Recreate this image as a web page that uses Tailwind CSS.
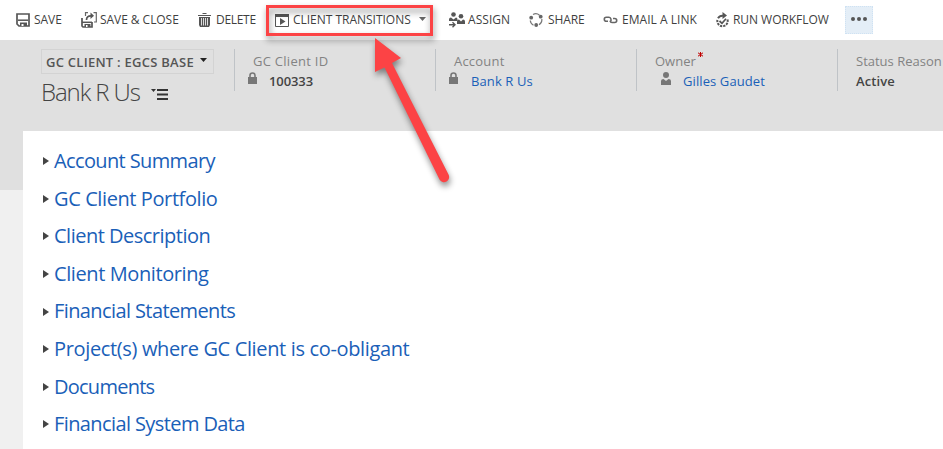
<!DOCTYPE html>
<html lang="en">
<head>
<meta charset="utf-8">
<title>GC Client</title>
<script src="https://cdn.jsdelivr.net/npm/@tailwindcss/browser@4"></script>
</head>
<body class="relative h-[449px] w-[943px] overflow-hidden bg-white font-['Open_Sans','Noto_Sans',sans-serif] text-[#444]">
<nav class="grid h-10 grid-cols-[65px_117px_77px_174px_80px_74px_113px_129px_28px] items-center pl-4 text-[12px] font-medium whitespace-nowrap text-[#3f3f3f]">
  <div class="flex items-center gap-[4px]">
    <svg class="h-[14px] w-[14px] shrink-0" viewBox="0 0 14 14"><path d="M1 1H13V13H3L1 11Z" fill="none" stroke="#555" stroke-width="1.7"/><path d="M2 7.2H12" stroke="#555" stroke-width="1.5"/><path d="M4 9.500H11V13H4Z" fill="#555"/><path d="M5.500 11H7.500V13H5.500Z" fill="white"/></svg>
    <span class="tracking-[-0.05px]">SAVE</span>
  </div>
  <div class="flex items-center gap-[3px]">
    <svg class="h-[16px] w-[16px] shrink-0" viewBox="0 0 16 16"><path d="M1 6V14L2 15H11V10" fill="none" stroke="#555" stroke-width="1.7"/><path d="M1 10.300H11" stroke="#555" stroke-width="1.5"/><path d="M3.500 12H9.500V15H3.500Z" fill="#555"/><path d="M5 13H6.500V15H5Z" fill="white"/><path d="M4.500 4V.700H7M12.500 .700H15.300V10H13" fill="none" stroke="#666" stroke-width="1.2"/><path d="M5.500 8C5.500 5 7 3.800 10 3.800" fill="none" stroke="#555" stroke-width="1.7"/><path d="M9.500 .500L13 3.800L9.500 7Z" fill="#555"/></svg>
    <span class="tracking-[-0.05px]">SAVE &amp; CLOSE</span>
  </div>
  <div class="flex items-center gap-[5px]">
    <svg class="h-[14px] w-[13px] shrink-0" viewBox="0 0 13 14"><path d="M0 2.5H13M4.5 .5H8.5" stroke="#555"/><path d="M1 4H12V12L11 14H2L1 12Z" fill="#555"/><path d="M3.5 5V12.5M5.5 5V12.5M7.5 5V12.5M9.5 5V12.5" stroke="white" stroke-width=".8"/></svg>
    <span class="tracking-[-0.3px]">DELETE</span>
  </div>
  <div class="flex items-center">
    <svg class="h-[13px] w-[14px] shrink-0" viewBox="0 0 14 13"><path d="M.5 .5H13.5V12.5H.5Z" fill="none" stroke="#555"/><path d="M0 0H14V3H0Z" fill="#555"/><path d="M5 4L10.5 7.5L5 11Z" fill="#555"/></svg>
    <span class="ml-[4px] w-[126px] tracking-[-0.02px]">CLIENT TRANSITIONS</span>
    <svg class="mb-[2px] h-[4px] w-[7px]" viewBox="0 0 7 4"><path d="M0 0H7L3.5 4Z" fill="#666"/></svg>
  </div>
  <div class="flex items-center gap-[3px]">
    <svg class="h-[16px] w-[16px] shrink-0" viewBox="0 0 16 16" fill="#555"><circle cx="4.5" cy="2.5" r="2.3"/><path d="M0 9V7.500Q0 5.500 2 5.500L4.5 7.500L7 5.500Q8.500 5.500 8.500 7.500V9Z"/><circle cx="12" cy="4.300" r="2.3"/><path d="M8 12V9.5Q8 7.5 10 7.5L12 9.500L14 7.5Q16 7.5 16 9.5V12Z"/><path d="M0 12.7H6M3.5 10.2L6 12.7L3.5 15.2" fill="none" stroke="#555" stroke-width="1.4"/></svg>
    <span class="tracking-[0.05px]">ASSIGN</span>
  </div>
  <div class="flex items-center gap-[5px]">
    <svg class="h-[14px] w-[14px] shrink-0" viewBox="0 0 14 14" fill="#666"><path d="M4 1.500A5.700 5.700 0 0 1 10.500 2.200M12.800 6A5.700 5.700 0 0 1 10 11.700M4.500 12.200A5.700 5.700 0 0 1 1.300 7.500" fill="none" stroke="#777" stroke-width="1.2"/><circle cx="2.2" cy="4.7" r="1.900"/><circle cx="11.7" cy="3.700" r="1.900"/><circle cx="7.2" cy="12" r="1.900"/></svg>
    <span class="tracking-[-0.1px]">SHARE</span>
  </div>
  <div class="flex items-center gap-[4px]">
    <svg class="h-[8px] w-[15px] shrink-0" viewBox="0 0 15 8"><path d="M5 5.300H3.3A2 2 0 0 1 3.3 1.300H6Q7.500 1.300 8 3.300Q8.500 5 6.800 5.300M10 2.500H11.7A2 2 0 0 1 11.7 6.5H9Q7.500 6.5 7 4.700" fill="none" stroke="#666" stroke-width="1.6"/></svg>
    <span class="tracking-[0.03px]">EMAIL A LINK</span>
  </div>
  <div class="flex items-center gap-[4px]">
    <svg class="h-[16px] w-[13px] shrink-0" viewBox="0 0 13 16"><path d="M2 6.3A5.2 5.2 0 0 1 7 3.8" fill="none" stroke="#555" stroke-width="2"/><path d="M6.5 0L11 3.5L6.5 7Z" fill="#555"/><path d="M11.5 7.5A5.2 5.2 0 1 1 1.4 8" fill="none" stroke="#555" stroke-width="2" stroke-dasharray="2.3 1"/><path d="M3.5 9L6 11.3L10 6.8" fill="none" stroke="#555" stroke-width="1.7"/></svg>
    <span class="tracking-[-0.05px]">RUN WORKFLOW</span>
  </div>
  <div class="flex h-7 items-center justify-center gap-[2px] border border-dotted border-[#cfe2f3] bg-[#e4eef7] pb-[2px]">
    <i class="h-[4px] w-[4px] rounded-full bg-[#555]"></i><i class="h-[4px] w-[4px] rounded-full bg-[#555]"></i><i class="h-[4px] w-[4px] rounded-full bg-[#555]"></i>
  </div>
</nav>
<header class="flex h-[91px] w-full overflow-hidden bg-[#e0e0e0] pt-[9px] pl-[41px] text-[13px] leading-[20px] whitespace-nowrap">
  <div class="w-[193px] shrink-0">
    <div class="flex h-[25px] w-[173px] items-center border border-[#d3d3d3] pl-[4px] text-[13px] font-semibold text-[#555]">
      <span class="w-[154px] tracking-[0.26px]">GC CLIENT : EGCS BASE</span>
      <svg class="mb-[4px] h-[4px] w-[7px]" viewBox="0 0 7 4"><path d="M0 0H7L3.5 4Z" fill="#222"/></svg>
    </div>
    <div class="mt-[2px] flex h-8 items-center">
      <h1 class="w-[110px] text-[24px] font-light tracking-[-1.1px] text-[#444]">Bank R Us</h1>
      <svg class="mt-[5px] h-[11px] w-[17px]" viewBox="0 0 17 11"><path d="M0 0H5L2.5 3Z" fill="#333"/><path d="M6 1H17M6 5.5H17M6 10H17" stroke="#333" stroke-width="2"/></svg>
    </div>
  </div>
  <div class="h-[42px] w-[201px] shrink-0 border-l border-[#bfc3c7] pt-[2px] pl-[18px]">
    <div class="tracking-[0.27px] text-[#838383]">GC Client ID</div>
    <div class="-ml-[5px] flex">
      <svg class="mt-[1px] mr-[12px] h-[12px] w-[9px]" viewBox="0 0 9 12"><path d="M2 6V3.5A2.5 2.5 0 0 1 7 3.5V6" fill="none" stroke="#777" stroke-width="1.6"/><path d="M0 5H9V12H0Z" fill="#777"/></svg>
      <b class="font-semibold tracking-[-0.1px]">100333</b>
    </div>
  </div>
  <div class="h-[42px] w-[201px] shrink-0 border-l border-[#bfc3c7] pt-[2px] pl-[18px]">
    <div class="tracking-[0.2px] text-[#838383]">Account</div>
    <div class="-ml-[5px] flex">
      <svg class="mt-[1px] mr-[13px] h-[12px] w-[9px]" viewBox="0 0 9 12"><path d="M2 6V3.5A2.5 2.5 0 0 1 7 3.5V6" fill="none" stroke="#777" stroke-width="1.6"/><path d="M0 5H9V12H0Z" fill="#777"/></svg>
      <a class="tracking-[0.1px] text-[#1a60b8]">Bank R Us</a>
    </div>
  </div>
  <div class="h-[42px] w-[201px] shrink-0 border-l border-[#bfc3c7] pt-[2px] pl-[18px]">
    <div class="flex text-[#838383]"><span class="w-[43px]">Owner</span><svg class="mt-[1px] h-[5px] w-[5px]" viewBox="0 0 5 5"><path d="M2.5 0V5M0 .8L5 4.2M5 .8L0 4.2" stroke="#c00000"/></svg></div>
    <div class="flex pl-[6px]">
      <svg class="mt-[1px] mr-[12px] h-[13px] w-[10px]" viewBox="0 0 10 13" fill="#777"><circle cx="5" cy="3" r="3"/><path d="M0 13V9Q0 7 2.5 7L5 9L7.5 7Q10 7 10 9V13Z"/></svg>
      <a class="tracking-[0.1px] text-[#1a60b8]">Gilles Gaudet</a>
    </div>
  </div>
  <div class="h-[42px] w-[106px] shrink-0 border-l border-[#bfc3c7] pt-[2px] pl-[18px]">
    <div class="text-[#838383]">Status Reason</div>
    <b class="font-semibold tracking-[0.1px]">Active</b>
  </div>
</header>
<div class="flex h-[318px]">
  <aside class="w-[23px] shrink-0 bg-[#f0f0f0]"><div class="h-[59px] bg-[#e0e0e0]"></div></aside>
  <main class="flex-1 pt-[11px] pl-5 text-[20px] leading-[37.6px] whitespace-nowrap text-[#1a60b8]">
    <div class="flex items-center gap-[5px]"><svg class="mt-px h-[8px] w-[6px]" viewBox="0 0 6 8"><path d="M0 0L6 4L0 8Z" fill="#444"/></svg><span class="tracking-[-0.63px]">Account Summary</span></div>
    <div class="flex items-center gap-[5px]"><svg class="mt-px h-[8px] w-[6px]" viewBox="0 0 6 8"><path d="M0 0L6 4L0 8Z" fill="#444"/></svg><span class="tracking-[-0.4px]">GC Client Portfolio</span></div>
    <div class="flex items-center gap-[5px]"><svg class="mt-px h-[8px] w-[6px]" viewBox="0 0 6 8"><path d="M0 0L6 4L0 8Z" fill="#444"/></svg><span class="tracking-[-0.5px]">Client Description</span></div>
    <div class="flex items-center gap-[5px]"><svg class="mt-px h-[8px] w-[6px]" viewBox="0 0 6 8"><path d="M0 0L6 4L0 8Z" fill="#444"/></svg><span class="tracking-[-0.4px]">Client Monitoring</span></div>
    <div class="flex items-center gap-[5px]"><svg class="mt-px h-[8px] w-[6px]" viewBox="0 0 6 8"><path d="M0 0L6 4L0 8Z" fill="#444"/></svg><span class="tracking-[-0.6px]">Financial Statements</span></div>
    <div class="flex items-center gap-[5px]"><svg class="mt-px h-[8px] w-[6px]" viewBox="0 0 6 8"><path d="M0 0L6 4L0 8Z" fill="#444"/></svg><span class="tracking-[-0.35px]">Project(s) where GC Client is co-obligant</span></div>
    <div class="flex items-center gap-[5px]"><svg class="mt-px h-[8px] w-[6px]" viewBox="0 0 6 8"><path d="M0 0L6 4L0 8Z" fill="#444"/></svg><span class="tracking-[-0.75px]">Documents</span></div>
    <div class="flex items-center gap-[5px]"><svg class="mt-px h-[8px] w-[6px]" viewBox="0 0 6 8"><path d="M0 0L6 4L0 8Z" fill="#444"/></svg><span class="tracking-[-0.6px]">Financial System Data</span></div>
  </main>
</div>
<!-- Callout frame and arrow over the command bar -->
<svg class="absolute top-0 left-0 h-[449px] w-[943px] [filter:drop-shadow(1px_4px_3px_rgba(0,0,0,0.45))]" viewBox="0 0 943 449">
  <rect x="267.5" y="6.5" width="164" height="28" fill="none" stroke="#fc4345" stroke-width="3"/>
  <path d="M375 38L401 58L392 63L448.5 174.5A5 5 0 0 1 439.5 179.5L384.500 67.500L375 72Z" fill="#fc4345"/>
</svg>
</body>
</html>
